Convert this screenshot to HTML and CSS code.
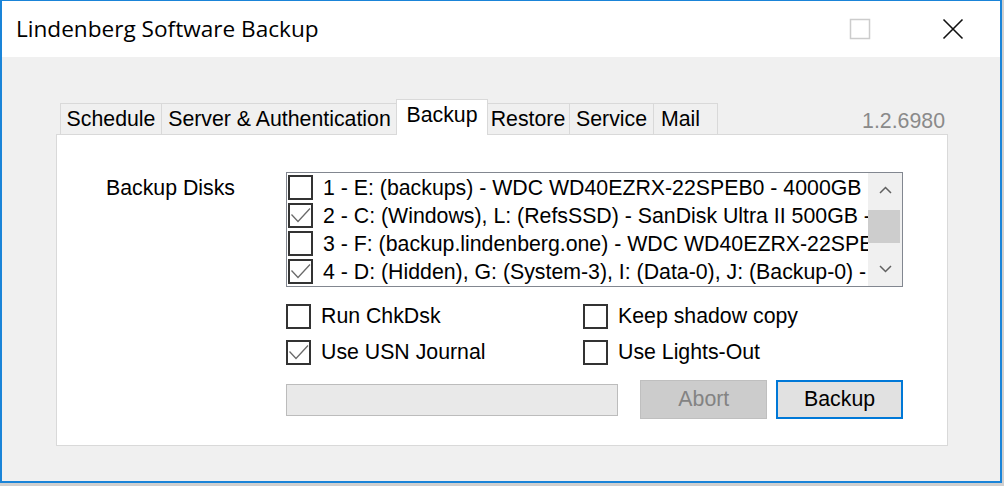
FILE: index.html
```html
<!DOCTYPE html>
<html>
<head>
<meta charset="utf-8">
<link rel="stylesheet" href="styles.css">
</head>
<body>
<div class="window">
  <div class="titlebar">
    <div class="title">Lindenberg Software Backup</div>
    <div class="caption">
      <div class="capbtn">
        <svg width="22" height="22" viewBox="0 0 22 22"><rect x="1.5" y="1.5" width="19" height="19" fill="none" stroke="#cccccc" stroke-width="1.5"/></svg>
      </div>
      <div class="capbtn close">
        <svg width="22" height="22" viewBox="0 0 22 22"><path d="M1.5 1.5 L20.5 20.5 M20.5 1.5 L1.5 20.5" stroke="#111" stroke-width="1.6" fill="none"/></svg>
      </div>
    </div>
  </div>
  <div class="client">
    <div class="tabrow">
      <div class="tab t-schedule">Schedule</div>
      <div class="tab t-server">Server &amp; Authentication</div>
      <div class="tab t-backup selected">Backup</div>
      <div class="tab t-restore">Restore</div>
      <div class="tab t-service">Service</div>
      <div class="tab t-mail">Mail</div>
      <div class="version">1.2.6980</div>
    </div>
    <div class="panel">
      <div class="label">Backup Disks</div>
      <div class="main">
        <div class="listbox">
          <div class="items">
            <div class="item"><span class="cb"><svg width="25" height="25" viewBox="0 0 25 25"><rect x="1" y="1" width="23" height="23" fill="#fff" stroke="#333" stroke-width="2"/></svg></span><span class="itxt">1 - E: (backups) - WDC WD40EZRX-22SPEB0 - 4000GB</span></div>
            <div class="item"><span class="cb"><svg width="25" height="25" viewBox="0 0 25 25"><rect x="1" y="1" width="23" height="23" fill="#fff" stroke="#333" stroke-width="2"/><polyline points="3.5,11.5 10,18.5 22,5.5" fill="none" stroke="#6a6a6a" stroke-width="1.3"/></svg></span><span class="itxt">2 - C: (Windows), L: (RefsSSD) - SanDisk Ultra II 500GB - 500GB</span></div>
            <div class="item"><span class="cb"><svg width="25" height="25" viewBox="0 0 25 25"><rect x="1" y="1" width="23" height="23" fill="#fff" stroke="#333" stroke-width="2"/></svg></span><span class="itxt">3 - F: (backup.lindenberg.one) - WDC WD40EZRX-22SPEB0 - 4000GB</span></div>
            <div class="item"><span class="cb"><svg width="25" height="25" viewBox="0 0 25 25"><rect x="1" y="1" width="23" height="23" fill="#fff" stroke="#333" stroke-width="2"/><polyline points="3.5,11.5 10,18.5 22,5.5" fill="none" stroke="#6a6a6a" stroke-width="1.3"/></svg></span><span class="itxt">4 - D: (Hidden), G: (System-3), I: (Data-0), J: (Backup-0) - WDC</span></div>
          </div>
          <div class="scrollbar">
            <div class="sbtn"><svg width="13" height="8" viewBox="0 0 13 8"><polyline points="1,7 6.5,1.5 12,7" fill="none" stroke="#606060" stroke-width="1.5"/></svg></div>
            <div class="track"><div class="thumb"></div></div>
            <div class="sbtn"><svg width="13" height="8" viewBox="0 0 13 8"><polyline points="1,1 6.5,6.5 12,1" fill="none" stroke="#606060" stroke-width="1.5"/></svg></div>
          </div>
        </div>
        <div class="options">
          <div class="opt"><span class="cb"><svg width="25" height="25" viewBox="0 0 25 25"><rect x="1" y="1" width="23" height="23" fill="#fff" stroke="#333" stroke-width="2"/></svg></span><span>Run ChkDsk</span></div>
          <div class="opt"><span class="cb"><svg width="25" height="25" viewBox="0 0 25 25"><rect x="1" y="1" width="23" height="23" fill="#fff" stroke="#333" stroke-width="2"/></svg></span><span>Keep shadow copy</span></div>
          <div class="opt"><span class="cb"><svg width="25" height="25" viewBox="0 0 25 25"><rect x="1" y="1" width="23" height="23" fill="#fff" stroke="#333" stroke-width="2"/><polyline points="3.5,11.5 10,18.5 22,5.5" fill="none" stroke="#6a6a6a" stroke-width="1.3"/></svg></span><span>Use USN Journal</span></div>
          <div class="opt"><span class="cb"><svg width="25" height="25" viewBox="0 0 25 25"><rect x="1" y="1" width="23" height="23" fill="#fff" stroke="#333" stroke-width="2"/></svg></span><span>Use Lights-Out</span></div>
        </div>
        <div class="actions">
          <div class="progress"></div>
          <div class="btn disabled">Abort</div>
          <div class="btn default">Backup</div>
        </div>
      </div>
    </div>
  </div>
</div>
</body>
</html>
```

FILE: styles.css
```css
html, body {
  margin: 0;
  padding: 0;
}
body {
  width: 1004px;
  height: 486px;
  background: #cfcfcf;
  overflow: hidden;
  font-family: "Liberation Sans", Arial, sans-serif;
  font-size: 21.3px;
  color: #000;
}
.window {
  box-sizing: border-box;
  width: 1002px;
  height: 483px;
  border-style: solid;
  border-color: #1a84d8;
  border-width: 1px 2px 2px 2px;
  display: flex;
  flex-direction: column;
  background: #f0f0f0;
}
.titlebar {
  height: 56px;
  background: #fff;
  display: flex;
  align-items: center;
  flex: none;
}
.title {
  font-family: "Open Sans", "Noto Sans", sans-serif;
  font-size: 22.6px;
  padding-left: 14px;
  padding-bottom: 2px;
  flex: 1;
  color: #000;
}
.caption {
  display: flex;
  height: 100%;
}
.capbtn {
  width: 93px;
  display: flex;
  align-items: center;
  justify-content: center;
  padding-bottom: 1px;
}
.capbtn.close {
  width: 94px;
}
.capbtn svg {
  display: block;
}
.client {
  flex: 1;
  display: flex;
  flex-direction: column;
  padding: 42px 52px 35px 54px;
}
.tabrow {
  height: 35px;
  display: flex;
  align-items: flex-end;
  padding-left: 4px;
  flex: none;
}
.tab {
  box-sizing: border-box;
  height: 31px;
  border: 1px solid #d9d9d9;
  border-bottom: none;
  background: #f0f0f0;
  padding-top: 3px;
  line-height: 24px;
  text-align: center;
  white-space: nowrap;
  margin-left: -1px;
}
.t-schedule { width: 102px; margin-left: 0; }
.t-server { width: 237px; }
.t-backup { width: 92px; margin-left: -2px; margin-right: -1px; }
.t-restore { width: 84px; }
.t-service { width: 85px; }
.t-mail { width: 65px; text-align: left; padding-left: 7px; }
.tab.selected {
  height: 36px;
  background: #fff;
  margin-bottom: -1px;
  position: relative;
  z-index: 1;
}
.version {
  margin-left: auto;
  margin-right: 3px;
  margin-bottom: 1px;
  line-height: 24px;
  color: #8a8a8a;
}
.panel {
  flex: 1;
  background: #fff;
  border: 1px solid #d9d9d9;
  display: flex;
  padding: 37px 0 0 49px;
}
.label {
  width: 180px;
  margin-top: 4px;
  line-height: 24px;
  flex: none;
}
.main {
  width: 617px;
  display: flex;
  flex-direction: column;
}
.listbox {
  box-sizing: border-box;
  height: 115px;
  border: 1px solid #828790;
  display: flex;
}
.items {
  flex: 1;
  overflow: hidden;
}
.item {
  height: 28px;
  display: flex;
  align-items: center;
  padding-left: 1px;
  white-space: nowrap;
}
.cb {
  width: 25px;
  height: 25px;
  flex: none;
}
.cb svg {
  display: block;
}
.itxt {
  margin-left: 10px;
  padding-top: 2px;
  line-height: 24px;
}
.scrollbar {
  width: 34px;
  background: #f0f0f0;
  display: flex;
  flex-direction: column;
  flex: none;
}
.sbtn {
  height: 34px;
  display: flex;
  align-items: center;
  justify-content: center;
}
.sbtn svg { display: block; }
.track {
  flex: 1;
  padding-top: 3px;
}
.thumb {
  height: 33px;
  background: #cdcdcd;
  margin-right: 2px;
}
.options {
  margin-top: 15px;
  display: grid;
  grid-template-columns: 297px 1fr;
  row-gap: 8px;
}
.opt {
  height: 28px;
  display: flex;
  align-items: center;
  gap: 10px;
  line-height: 24px;
  white-space: nowrap;
}
.actions {
  margin-top: 14px;
  height: 39px;
  display: flex;
  align-items: center;
}
.progress {
  box-sizing: border-box;
  width: 333px;
  height: 32px;
  border: 1px solid #bcbcbc;
  background: #e9e9e9;
}
.btn {
  box-sizing: border-box;
  width: 127px;
  height: 39px;
  display: flex;
  align-items: center;
  justify-content: center;
  padding-bottom: 1px;
}
.btn.disabled {
  margin-left: 22px;
  background: #cccccc;
  border: 1px solid #bfbfbf;
  color: #838383;
}
.btn.default {
  margin-left: 9px;
  background: #e1e1e1;
  border: 2px solid #0078d7;
}
```
